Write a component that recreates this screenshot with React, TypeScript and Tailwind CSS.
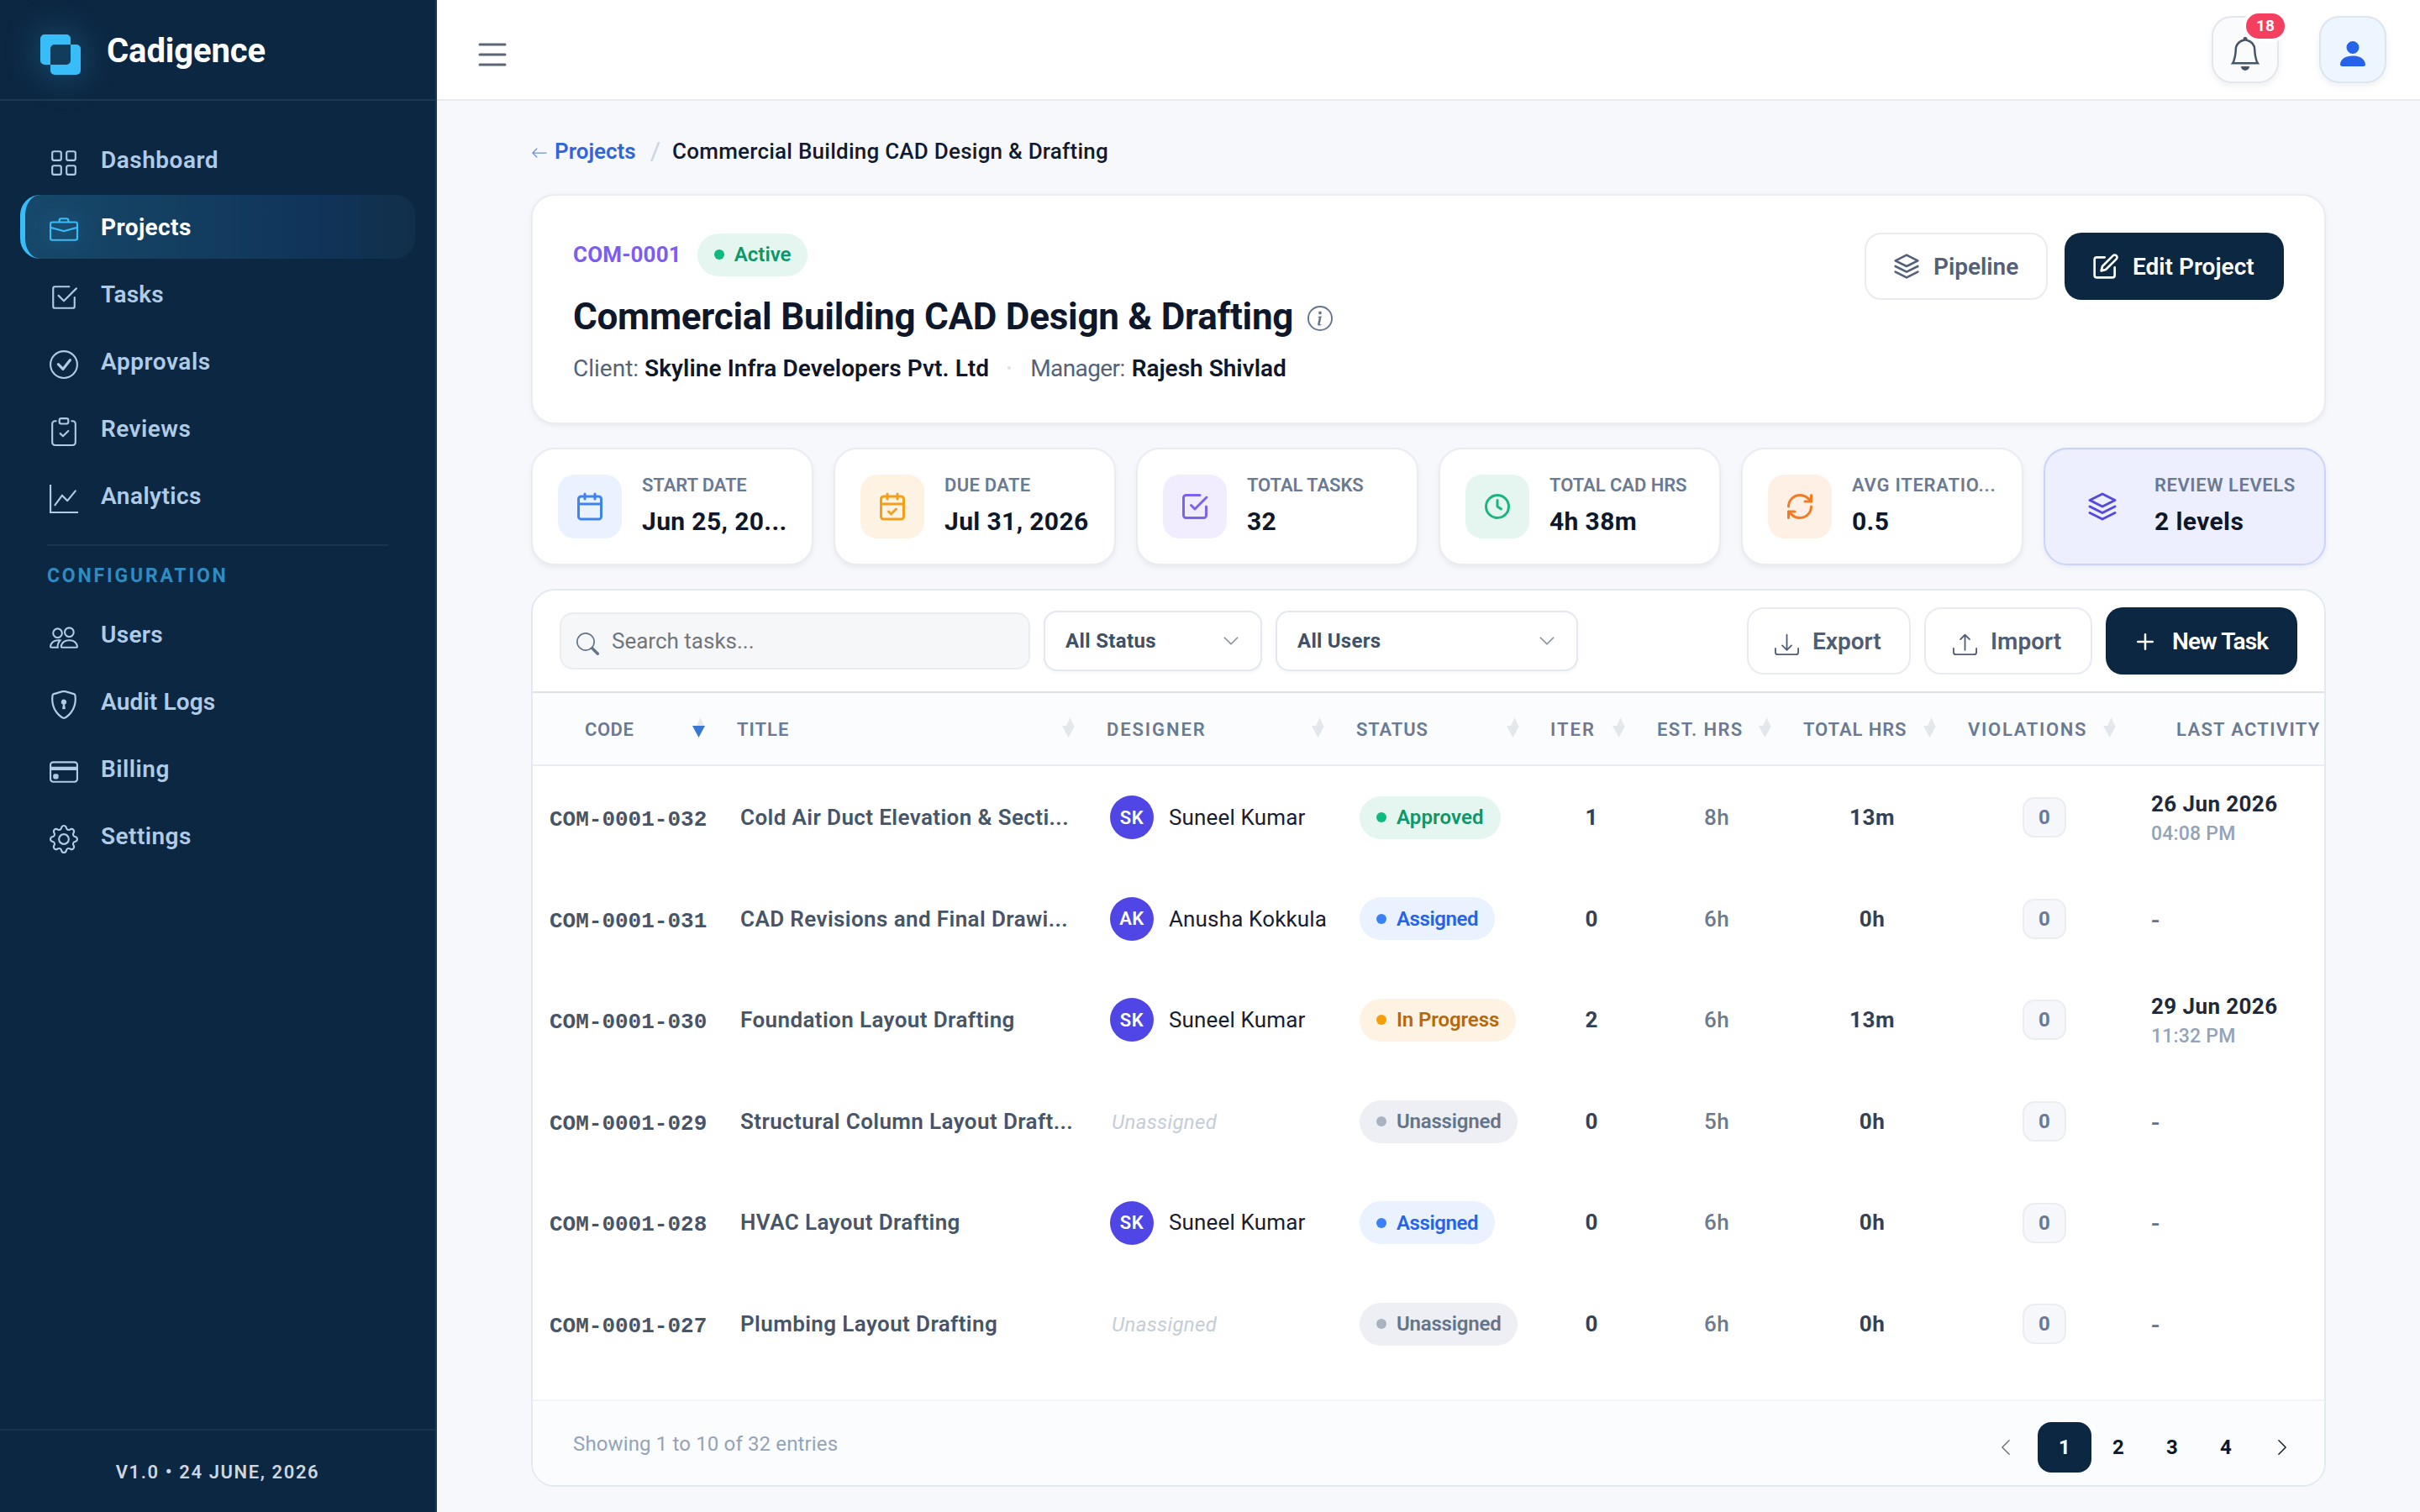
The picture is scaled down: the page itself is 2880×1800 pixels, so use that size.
import type { ReactNode } from "react";
import clsx from "clsx";
import type { IconType } from "react-icons";
import {
  BsArrowLeft,
  BsBell,
  BsBriefcase,
  BsCheck2Square,
  BsCheckCircle,
  BsChevronDown,
  BsChevronLeft,
  BsChevronRight,
  BsClipboardCheck,
  BsCreditCard,
  BsDownload,
  BsGear,
  BsGraphUp,
  BsGrid,
  BsInfoCircle,
  BsList,
  BsPeople,
  BsPersonFill,
  BsPlus,
  BsSearch,
  BsShieldLock,
  BsUpload,
} from "react-icons/bs";
import { FiEdit, FiLayers } from "react-icons/fi";
import { Calendar, CalendarCheck, RefreshCw } from "lucide-react";

/* ---------- Sidebar ---------- */

type NavItem = { label: string; icon: IconType; active?: boolean; tracking?: string };

const mainNav: NavItem[] = [
  { label: "Dashboard", icon: BsGrid, tracking: "tracking-[0.5px]" },
  { label: "Projects", icon: BsBriefcase, active: true, tracking: "tracking-[0.4px]" },
  { label: "Tasks", icon: BsCheck2Square, tracking: "tracking-[0.2px]" },
  { label: "Approvals", icon: BsCheckCircle, tracking: "tracking-[0.55px]" },
  { label: "Reviews", icon: BsClipboardCheck, tracking: "tracking-[0.45px]" },
  { label: "Analytics", icon: BsGraphUp, tracking: "tracking-[0.45px]" },
];

const configNav: NavItem[] = [
  { label: "Users", icon: BsPeople, tracking: "tracking-[0.3px]" },
  { label: "Audit Logs", icon: BsShieldLock, tracking: "tracking-[0.15px]" },
  { label: "Billing", icon: BsCreditCard, tracking: "tracking-[0.5px]" },
  { label: "Settings", icon: BsGear, tracking: "tracking-[0.45px]" },
];

function NavLink({ label, icon: Icon, active, tracking }: NavItem) {
  return (
    <a
      className={clsx(
        "flex h-[76px] items-center gap-[27px] rounded-3xl border-l-[6px] pl-[29px] text-[28px]",
        tracking,
        active
          ? "border-[#38bdf8] bg-[linear-gradient(90deg,#17486a_0%,#133e60_40%,#10345a_75%,#102f49_100%)] font-bold text-white"
          : "border-transparent font-semibold text-[#b0cbe6]",
      )}
    >
      <Icon
        className={clsx(
          "mt-2 size-[34px] shrink-0",
          active && "text-[#38bdf8] drop-shadow-[0_0_14px_rgba(56,189,248,0.45)]",
        )}
      />
      {label}
    </a>
  );
}

function Logo() {
  return (
    <svg
      viewBox="0 0 48 48"
      className="mt-3 size-12 shrink-0 drop-shadow-[0_0_20px_rgba(56,189,248,0.32)]"
    >
      <rect x="11" y="11" width="26" height="26" fill="#123c5c" />
      <path
        fill="#38bdf8"
        fillRule="evenodd"
        d="M5 0H31A5 5 0 0 1 36 5V31A5 5 0 0 1 31 36H5A5 5 0 0 1 0 31V5A5 5 0 0 1 5 0ZM17 12H43A5 5 0 0 1 48 17V43A5 5 0 0 1 43 48H17A5 5 0 0 1 12 43V17A5 5 0 0 1 17 12Z"
      />
    </svg>
  );
}

function Sidebar() {
  return (
    <aside className="flex w-[520px] shrink-0 flex-col border-r-2 border-[#1f3a54] bg-[#0c2742]">
      <div className="flex h-[120px] items-center gap-[31px] border-b-2 border-[#1c3851] pl-12">
        <Logo />
        <span className="mt-[3px] text-[40px] font-bold tracking-[-0.1px] text-white">Cadigence</span>
      </div>
      <nav className="flex flex-1 flex-col px-6 pt-8">
        <div className="flex flex-col gap-1">
          {mainNav.map((item) => (
            <NavLink key={item.label} {...item} />
          ))}
        </div>
        <div className="mx-8 mt-5 flex h-[69px] items-center border-t-2 border-[#1a344e] pt-[6px] text-[23px] font-bold tracking-[2.8px] text-[#2f8cc0]">
          CONFIGURATION
        </div>
        <div className="flex flex-col gap-1">
          {configNav.map((item) => (
            <NavLink key={item.label} {...item} />
          ))}
        </div>
      </nav>
      <div className="flex h-[99px] items-center justify-center border-t-2 border-[#1a344e] pt-0.5 text-[22px] font-semibold tracking-[1.6px] text-[#cdd6df]">
        V1.0 • 24 JUNE, 2026
      </div>
    </aside>
  );
}

/* ---------- Top bar ---------- */

function TopBar() {
  return (
    <header className="flex h-[120px] shrink-0 items-center justify-between border-b-2 border-[#eaebee] bg-white pr-10 pl-[42px]">
      <BsList className="mt-3 size-12 text-[#5b6778]" />
      <div className="flex gap-12">
        <button className="relative flex size-20 items-center justify-center rounded-3xl border-2 border-[#e3e7ec] bg-[#f9fbfd] shadow-[0_4px_8px_rgba(15,23,42,0.06)]">
          <BsBell className="mt-2.5 size-10 text-[#475569]" />
          <span className="absolute -top-[5px] left-[39px] flex h-[30px] w-[46px] items-center justify-center rounded-full bg-[#f43f5e] text-[19px] font-bold text-white ring-4 ring-white">
            18
          </span>
        </button>
        <button className="flex size-20 items-center justify-center rounded-3xl border-2 border-[#dde6ef] bg-[#edf5ff] shadow-[0_4px_8px_rgba(15,23,42,0.06)]">
          <BsPersonFill className="mt-2.5 size-10 text-[#2563eb]" />
        </button>
      </div>
    </header>
  );
}

/* ---------- Status pills ---------- */

type Tone = "green" | "blue" | "amber" | "gray";

const pillTone: Record<Tone, string> = {
  green: "bg-[#e5f6f0] text-[#0c9669]",
  blue: "bg-[#eaf2ff] text-[#2563eb]",
  amber: "bg-[#fef3e2] text-[#b4690e]",
  gray: "bg-[#eeeff4] text-[#64748b]",
};

const dotTone: Record<Tone, string> = {
  green: "bg-[#10b981]",
  blue: "bg-[#3b82f6]",
  amber: "bg-[#f59e0b]",
  gray: "bg-[#a9b2c1]",
};

function Pill({ tone, tracking, children }: { tone: Tone; tracking?: string; children: ReactNode }) {
  return (
    <span
      className={clsx(
        "inline-flex h-[51px] items-center gap-3 rounded-full px-5 text-[24px] font-semibold",
        tracking,
        pillTone[tone],
      )}
    >
      <i className={clsx("size-3 rounded-full", dotTone[tone])} />
      {children}
    </span>
  );
}

/* ---------- Project summary ---------- */

function ProjectCard() {
  return (
    <section className="flex h-[274px] items-start justify-between rounded-[28px] border-2 border-[#eaecf1] bg-white px-12 py-11 shadow-[0_2px_6px_rgba(15,23,42,0.06)]">
      <div>
        <div className="flex h-[52px] items-center gap-[19px]">
          <span className="text-[26px] font-bold tracking-[0.15px] text-[#7c5cf2]">COM-0001</span>
          <Pill tone="green">Active</Pill>
        </div>
        <div className="mt-[22px] flex h-[52px] items-center gap-[17px]">
          <h1 className="text-[44px] font-bold tracking-[-0.26px] text-[#0f172a]">
            Commercial Building CAD Design &amp; Drafting
          </h1>
          <BsInfoCircle className="mt-1 size-[30px] text-[#64748b]" />
        </div>
        <div className="mt-[15px] flex h-10 items-center text-[28px] text-[#55637a]">
          <span>Client:</span>
          <b className="ml-[7px] font-semibold tracking-[0.08px] text-[#0f172a]">
            Skyline Infra Developers Pvt. Ltd
          </b>
          <i className="mr-[23px] ml-[22px] size-1 rounded-full bg-[#dde2e9]" />
          <span className="tracking-[-0.6px]">Manager:</span>
          <b className="ml-[8px] font-semibold text-[#0f172a]">Rajesh Shivlad</b>
        </div>
      </div>
      <div className="flex gap-5">
        <button className="flex h-20 w-[218px] items-center gap-4 rounded-[20px] border-2 border-[#e9ebf2] bg-white pl-8 text-[28px] font-semibold text-[#526079]">
          <FiLayers className="size-8" />
          Pipeline
        </button>
        <button className="flex h-20 w-[261px] items-center gap-4 rounded-[20px] bg-[#0c2742] pl-[33px] text-[28px] font-semibold text-white">
          <FiEdit className="size-8" />
          Edit Project
        </button>
      </div>
    </section>
  );
}

/* ---------- Stat tiles ---------- */

function CheckSquareIcon() {
  return (
    <svg viewBox="0 0 24 24" className="size-9" fill="none" stroke="currentColor" strokeWidth="2" strokeLinecap="round" strokeLinejoin="round">
      <path d="M9 11l3 3 9.3-9.3" />
      <path d="M21 12v7a2 2 0 0 1-2 2H5a2 2 0 0 1-2-2V5a2 2 0 0 1 2-2h11" />
    </svg>
  );
}

function ClockIcon() {
  return (
    <svg viewBox="0 0 24 24" className="size-9" fill="none" stroke="currentColor" strokeWidth="2" strokeLinecap="round" strokeLinejoin="round">
      <circle cx="12" cy="12" r="9" />
      <path d="M12 7v5l3 2" />
    </svg>
  );
}

const stats = [
  { label: "START DATE", value: "Jun 25, 20...", box: "bg-[#eaf2ff] text-[#3f83ee]", icon: <Calendar className="size-9" />, tracking: "tracking-[-0.1px]" },
  { label: "DUE DATE", value: "Jul 31, 2026", box: "bg-[#fef3e2] text-[#f0a01c]", icon: <CalendarCheck className="size-9" />, tracking: "tracking-[0.3px]" },
  { label: "TOTAL TASKS", value: "32", box: "bg-[#f1edfe] text-[#7c62ee]", icon: <CheckSquareIcon />, tracking: "tracking-[-0.1px]" },
  { label: "TOTAL CAD HRS", value: "4h 38m", box: "bg-[#e5f6f0] text-[#1bb584]", icon: <ClockIcon />, tracking: "tracking-[-0.05px]" },
  { label: "AVG ITERATIO...", value: "0.5", box: "bg-[#fff0e5] text-[#f57a22]", icon: <RefreshCw className="size-9" />, tracking: "tracking-[0.75px]" },
  { label: "REVIEW LEVELS", value: "2 levels", box: "text-[#5348e0]", icon: <FiLayers className="size-9" />, tracking: "tracking-[0.55px]", highlight: true },
];

function StatTiles() {
  return (
    <section className="mt-7 grid grid-cols-6 gap-6">
      {stats.map((s) => (
        <div
          key={s.label}
          className={clsx(
            "flex h-[140px] items-center gap-6 rounded-[28px] border-2 pl-[30px]",
            s.highlight
              ? "border-[#cbd3f8] bg-[#edeffe] shadow-[0_2px_6px_rgba(79,70,229,0.08)]"
              : "border-[#eaecf1] bg-white shadow-[0_3px_6px_rgba(15,23,42,0.06)]",
          )}
        >
          <div className={clsx("flex size-[76px] shrink-0 items-center justify-center rounded-[20px]", s.box)}>
            {s.icon}
          </div>
          <div className="-mt-1 whitespace-nowrap">
            <div className={clsx("text-[22px] leading-8 font-semibold text-[#6b7a93]", s.tracking)}>
              {s.label}
            </div>
            <div className="mt-[7px] text-[30px] leading-10 font-bold tracking-[0.38px] text-[#0f172a]">
              {s.value}
            </div>
          </div>
        </div>
      ))}
    </section>
  );
}

/* ---------- Task table ---------- */

function Toolbar() {
  return (
    <div className="flex h-[122px] shrink-0 items-center border-b-2 border-[#dfe1e5] pr-8 pl-8">
      <div className="flex h-[68px] w-[560px] items-center gap-[15px] rounded-2xl border-2 border-[#eaecf0] bg-[#f6f7f9] pl-[18px]">
        <BsSearch className="mt-1.5 size-[27px] text-[#64748b]" />
        <span className="mt-px text-[26px] text-[#70767d]">Search tasks...</span>
      </div>
      <div className="ml-4 flex h-[72px] w-[260px] items-center justify-between rounded-2xl border-2 border-[#e2e8f0] bg-white pr-[25px] pl-6 text-[24px] font-bold tracking-[0.35px] text-[#415064] shadow-[0_2px_4px_rgba(15,23,42,0.04)]">
        All Status
        <BsChevronDown className="size-5 stroke-[0.4] text-[#8f959c]" />
      </div>
      <div className="ml-4 flex h-[72px] w-[360px] items-center justify-between rounded-2xl border-2 border-[#e2e8f0] bg-white pr-[25px] pl-6 text-[24px] font-bold tracking-[0.25px] text-[#415064] shadow-[0_2px_4px_rgba(15,23,42,0.04)]">
        All Users
        <BsChevronDown className="size-5 stroke-[0.4] text-[#8f959c]" />
      </div>
      <div className="ml-auto flex gap-4">
        <button className="flex h-20 w-[195px] items-center gap-4 rounded-[20px] border-2 border-[#e9ebf2] bg-white pl-[31px] text-[28px] font-semibold text-[#4f5d74]">
          <BsDownload className="mt-2 size-[29px]" />
          Export
        </button>
        <button className="flex h-20 w-[200px] items-center gap-4 rounded-[20px] border-2 border-[#e9ebf2] bg-white pl-8 text-[28px] font-semibold text-[#4f5d74]">
          <BsUpload className="mt-2 size-[29px]" />
          Import
        </button>
        <button className="flex h-20 w-[228px] items-center gap-3 rounded-[20px] bg-[#0c2742] pt-px pl-[27px] text-[28px] font-semibold tracking-[-0.9px] text-white">
          <BsPlus className="size-10" />
          New Task
        </button>
      </div>
    </div>
  );
}

function SortMark({ active }: { active?: boolean }) {
  return (
    <svg viewBox="0 0 16 24" className="-mt-1.5 h-6 w-4 shrink-0">
      <path d="M9.5 0L14 10H5Z" fill="#e6e8ec" />
      <path d="M0 10H15L7.5 24Z" fill={active ? "#3877d3" : "#e3e6ea"} />
    </svg>
  );
}

const columns = [
  { label: "CODE", pad: "pl-[62px]", tracking: "tracking-[0.5px]", active: true },
  { label: "TITLE", pad: "pl-[15px]", tracking: "tracking-[1px]" },
  { label: "DESIGNER", pad: "pl-[15px]", tracking: "tracking-[1.9px]" },
  { label: "STATUS", pad: "pl-[15px]", tracking: "tracking-[0.85px]" },
  { label: "ITER", pad: "pl-[14px]", tracking: "tracking-[2px]" },
  { label: "EST. HRS", pad: "pl-[15px]", tracking: "tracking-[1.4px]" },
  { label: "TOTAL HRS", pad: "pl-[15px]", tracking: "tracking-[0.9px]" },
  { label: "VIOLATIONS", pad: "pl-[15px]", tracking: "tracking-[1.7px]" },
  { label: "LAST ACTIVITY", pad: "pl-[49px]", tracking: "tracking-[1.3px]", unsorted: true },
];

type Task = {
  code: string;
  title: string;
  initials?: string;
  designer?: string;
  status: string;
  tone: Tone;
  tracking: string;
  iter: number;
  est: string;
  total: string;
  date?: string;
  time?: string;
};

const tasks: Task[] = [
  { code: "COM-0001-032", title: "Cold Air Duct Elevation & Secti...", initials: "SK", designer: "Suneel Kumar", status: "Approved", tone: "green", tracking: "tracking-[0.1px]", iter: 1, est: "8h", total: "13m", date: "26 Jun 2026", time: "04:08 PM" },
  { code: "COM-0001-031", title: "CAD Revisions and Final Drawi...", initials: "AK", designer: "Anusha Kokkula", status: "Assigned", tone: "blue", tracking: "tracking-[-0.4px]", iter: 0, est: "6h", total: "0h" },
  { code: "COM-0001-030", title: "Foundation Layout Drafting", initials: "SK", designer: "Suneel Kumar", status: "In Progress", tone: "amber", tracking: "tracking-[-0.1px]", iter: 2, est: "6h", total: "13m", date: "29 Jun 2026", time: "11:32 PM" },
  { code: "COM-0001-029", title: "Structural Column Layout Draft...", status: "Unassigned", tone: "gray", tracking: "tracking-[-0.2px]", iter: 0, est: "5h", total: "0h" },
  { code: "COM-0001-028", title: "HVAC Layout Drafting", initials: "SK", designer: "Suneel Kumar", status: "Assigned", tone: "blue", tracking: "tracking-[-0.4px]", iter: 0, est: "6h", total: "0h" },
  { code: "COM-0001-027", title: "Plumbing Layout Drafting", status: "Unassigned", tone: "gray", tracking: "tracking-[-0.2px]", iter: 0, est: "6h", total: "0h" },
];

const gridCols = "grid grid-cols-[228px_440px_297px_232px_126px_174px_196px_214px_minmax(0,1fr)]";

function TaskRow({ task }: { task: Task }) {
  return (
    <div className={clsx(gridCols, "h-[120.6px] items-center text-[26px] whitespace-nowrap")}>
      <div className="pt-[6px] pl-5 font-['Liberation_Mono',monospace] font-bold text-[#475569]">{task.code}</div>
      <div className="pl-[19px] font-semibold tracking-[0.4px] text-[#475569]">{task.title}</div>
      <div className="pl-[19px]">
        {task.designer ? (
          <div className="flex items-center gap-[18px]">
            <span className="flex size-[52px] items-center justify-center rounded-full bg-[#4f46e5] text-[22px] font-semibold tracking-[0.5px] text-white">
              {task.initials}
            </span>
            <span className="tracking-[0.15px] text-[#172033]">{task.designer}</span>
          </div>
        ) : (
          <span className="pl-0.5 text-[24px] text-[#c5cdd8] italic tracking-[0.35px]">Unassigned</span>
        )}
      </div>
      <div className="flex pl-[19px]">
        <Pill tone={task.tone} tracking={task.tracking}>
          {task.status}
        </Pill>
      </div>
      <div className="text-center font-bold text-[#334155]">{task.iter}</div>
      <div className="pr-0.5 text-center font-medium tracking-[0.5px] text-[#6b7a90]">{task.est}</div>
      <div className="pr-0.5 text-center font-bold tracking-[0.5px] text-[#334155]">{task.total}</div>
      <div className="flex justify-center pr-0.5">
        <span className="flex h-12 w-[52px] items-center justify-center rounded-[14px] border-2 border-[#ebedf1] bg-[#f6f7fa] text-[24px] font-bold text-[#6b7898]">
          0
        </span>
      </div>
      <div className="pt-[3px] pl-[19px]">
        {task.date ? (
          <>
            <div className="leading-[35px] font-bold tracking-[0.4px] text-[#1e293b]">{task.date}</div>
            <div className="text-[23px] leading-[35px] font-medium tracking-[0.2px] text-[#94a3b8]">{task.time}</div>
          </>
        ) : (
          <span className="text-[30px] font-medium text-[#64748b]">-</span>
        )}
      </div>
    </div>
  );
}

function Pagination() {
  return (
    <div className="mt-[9px] flex h-[60px] items-center text-[24px] font-bold text-[#0f172a]">
      <BsChevronLeft className="mr-[27px] size-[22px] text-[#6b7076]" />
      <span className="flex h-[60px] w-16 items-center justify-center rounded-2xl bg-[#0c2742] text-white">1</span>
      {["2", "3", "4"].map((n) => (
        <span key={n} className="w-16 pt-px text-center">
          {n}
        </span>
      ))}
      <BsChevronRight className="ml-6 size-[22px]" />
    </div>
  );
}

function TaskPanel() {
  return (
    <section className="mt-7 flex h-[1069px] flex-col overflow-hidden rounded-[28px] border-2 border-[#e4e9f1] bg-white">
      <Toolbar />
      <div className={clsx(gridCols, "h-[87px] shrink-0 border-b-2 border-[#e8ebf1] bg-[#fafcfe]")}>
        {columns.map((c) => (
          <div
            key={c.label}
            className={clsx(
              "flex items-center justify-between pt-0.5 text-[22px] font-semibold whitespace-nowrap text-[#6b7a93]",
              c.pad,
              c.tracking,
              !c.unsorted && "pr-[22px]",
            )}
          >
            {c.label}
            {!c.unsorted && <SortMark active={c.active} />}
          </div>
        ))}
      </div>
      <div className="flex-1 pt-px">
        {tasks.map((t) => (
          <TaskRow key={t.code} task={t} />
        ))}
      </div>
      <footer className="flex h-[102px] shrink-0 items-center justify-between border-t-2 border-[#f1f3f6] bg-[#fafcfe] pr-[39px] pl-12">
        <span className="pt-0.5 text-[24px] tracking-[0.14px] text-[#94a3b8]">Showing 1 to 10 of 32 entries</span>
        <Pagination />
      </footer>
    </section>
  );
}

export default function App() {
  return (
    <div className="flex h-[1800px] w-[2880px] overflow-hidden bg-[#f6f8fc] font-['Roboto',sans-serif] leading-tight antialiased">
      <Sidebar />
      <div className="flex min-w-0 flex-1 flex-col">
        <TopBar />
        <main className="flex-1 px-28 pt-10">
          <div className="mb-[31px] flex h-10 items-center text-[26px] font-medium">
            <BsArrowLeft className="mt-1 size-5 text-[#6a93e0]" />
            <span className="ml-2 font-semibold text-[#2f66dc]">Projects</span>
            <span className="ml-[17px] text-[30px] font-normal text-[#cbd5e1]">/</span>
            <span className="ml-[14px] tracking-[0.24px] text-[#111a2e]">
              Commercial Building CAD Design &amp; Drafting
            </span>
          </div>
          <ProjectCard />
          <StatTiles />
          <TaskPanel />
        </main>
      </div>
    </div>
  );
}
